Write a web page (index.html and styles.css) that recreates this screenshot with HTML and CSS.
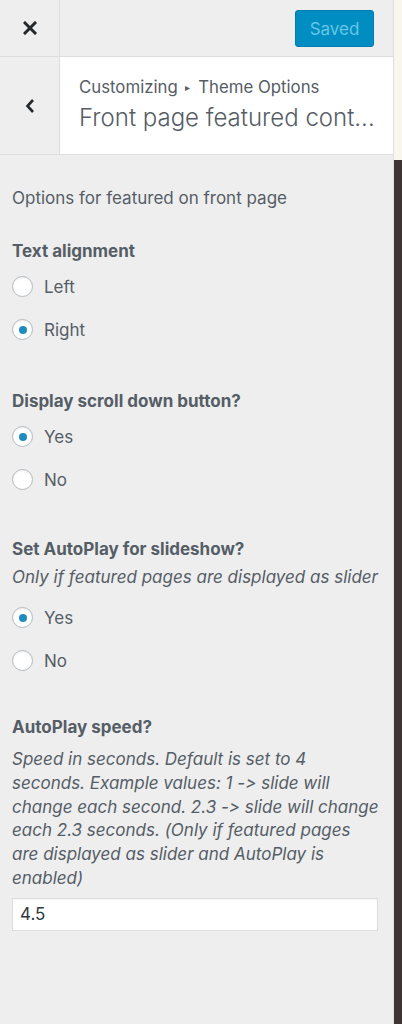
FILE: index.html
```html
<!DOCTYPE html>
<html lang="en">
<head>
  <meta charset="UTF-8" />
  <meta name="viewport" content="width=device-width, initial-scale=1.0"/>
  <title>Customizing: Front page featured content</title>
  <link rel="stylesheet" href="styles.css">
</head>
<body>

  <div class="layout">

    <!-- Customizer sidebar -->
    <div class="sidebar">

      <div class="top-bar">
        <a href="#" class="close-btn" aria-label="Close">
          <svg width="14" height="14" viewBox="0 0 14 14">
            <path d="M2 2 L12 12 M12 2 L2 12" stroke="#23282d" stroke-width="3" stroke-linecap="square" fill="none"/>
          </svg>
        </a>
        <div class="top-actions">
          <button class="btn-saved" disabled>Saved</button>
        </div>
      </div>

      <div class="section-head">
        <a href="#" class="back-btn" aria-label="Back">
          <svg width="10" height="16" viewBox="0 0 10 16">
            <path d="M8 2 L2.5 8 L8 14" stroke="#23282d" stroke-width="2.6" fill="none"/>
          </svg>
        </a>
        <div class="section-title">
          <div class="crumbs">Customizing <span class="crumb-sep">&#9656;</span> Theme Options</div>
          <h3>Front page featured cont...</h3>
        </div>
      </div>

      <div class="controls">
        <p class="section-desc">Options for featured on front page</p>

        <div class="control ctl-align">
          <span class="control-title">Text alignment</span>
          <label class="radio-row"><input type="radio" name="align" /> <span>Left</span></label>
          <label class="radio-row"><input type="radio" name="align" checked /> <span>Right</span></label>
        </div>

        <div class="control ctl-scroll">
          <span class="control-title">Display scroll down button?</span>
          <label class="radio-row"><input type="radio" name="scroll" checked /> <span>Yes</span></label>
          <label class="radio-row"><input type="radio" name="scroll" /> <span>No</span></label>
        </div>

        <div class="control ctl-autoplay">
          <span class="control-title">Set AutoPlay for slideshow?</span>
          <span class="control-desc">Only if featured pages are displayed as slider</span>
          <label class="radio-row"><input type="radio" name="autoplay" checked /> <span>Yes</span></label>
          <label class="radio-row"><input type="radio" name="autoplay" /> <span>No</span></label>
        </div>

        <div class="control ctl-speed">
          <span class="control-title">AutoPlay speed?</span>
          <span class="control-desc speed-desc">Speed in seconds. Default is set to 4 seconds. Example values: 1 -&gt; slide will change each second. 2.3 -&gt; slide will change each 2.3 seconds. (Only if featured pages are displayed as slider and AutoPlay is enabled)</span>
          <input type="text" class="text-input" value="4.5" />
        </div>
      </div>

    </div>

    <!-- Preview frame edge -->
    <div class="preview">
      <div class="preview-top"></div>
      <div class="preview-body"></div>
    </div>

  </div>

</body>
</html>
```

FILE: styles.css
```css
* {
  margin: 0;
  padding: 0;
  box-sizing: border-box;
}

body {
  font-family: Inter, "Noto Sans", sans-serif;
  font-feature-settings: "calt" 0;
  color: #555d66;
  background-color: #eeeeee;
}

.layout {
  display: flex;
  height: 1024px;
  overflow: hidden;
}

.sidebar {
  width: 394px;
  flex-shrink: 0;
  background-color: #eeeeee;
  border-right: 1px solid #dddddd;
}

.preview {
  flex: 1;
  display: flex;
  flex-direction: column;
}

.preview-top {
  height: 160px;
  background-color: #f9f6ee;
}

.preview-body {
  flex: 1;
  background-color: #3e3434;
}

/* top bar */
.top-bar {
  display: flex;
  height: 57px;
  border-bottom: 1px solid #dddddd;
}

.close-btn {
  width: 60px;
  display: flex;
  align-items: center;
  justify-content: center;
  border-right: 1px solid #dddddd;
}

.top-actions {
  flex: 1;
  display: flex;
  align-items: center;
  justify-content: flex-end;
  padding-right: 19px;
}

.btn-saved {
  width: 79px;
  height: 37px;
  background-color: #008ec2;
  border: 1px solid #007cb2;
  border-radius: 3px;
  color: #66c6e4;
  font-family: inherit;
  font-size: 17px;
  margin-top: 1px;
}

/* section header */
.section-head {
  display: flex;
  height: 98px;
  border-bottom: 1px solid #dddddd;
}

.back-btn {
  width: 60px;
  display: flex;
  align-items: center;
  justify-content: center;
  border-right: 1px solid #dddddd;
}

.section-title {
  flex: 1;
  min-width: 0;
  background-color: #ffffff;
  padding: 19px 8px 0 19px;
}

.crumbs {
  font-size: 16.8px;
  line-height: 22px;
  color: #555d66;
  white-space: nowrap;
}

.crumb-sep {
  font-size: 10px;
  vertical-align: 2px;
  margin: 0 3px;
}

.section-title h3 {
  font-size: 24px;
  font-weight: 300;
  line-height: 34px;
  margin-top: 3px;
  color: #555d66;
  white-space: nowrap;
  overflow: hidden;
}

/* controls */
.controls {
  padding: 31px 12px 0 12px;
}

.section-desc {
  font-size: 17px;
  line-height: 24px;
  margin-bottom: 29px;
}

.control {
  display: flex;
  flex-direction: column;
}

.control-title {
  font-size: 17px;
  font-weight: 700;
  line-height: 24px;
  margin-bottom: 2px;
}

.control-desc {
  font-size: 17px;
  font-style: italic;
  line-height: 24px;
  margin-top: 2px;
  margin-bottom: 7px;
}

.ctl-align {
  margin-bottom: 38px;
}

.ctl-scroll {
  margin-bottom: 36px;
}

.ctl-autoplay {
  margin-bottom: 33px;
}

.speed-desc {
  margin-top: 7px;
  line-height: 23.8px;
  margin-bottom: 7px;
}

.radio-row {
  display: flex;
  align-items: center;
  height: 43px;
  font-size: 17px;
}

.radio-row input {
  appearance: none;
  width: 21px;
  height: 21px;
  border: 1px solid #b4b9be;
  border-radius: 50%;
  background-color: #ffffff;
  box-shadow: inset 0 1px 2px rgba(0, 0, 0, 0.07);
  margin-right: 11px;
  display: flex;
  align-items: center;
  justify-content: center;
}

.radio-row input:checked::before {
  content: "";
  width: 8px;
  height: 8px;
  border-radius: 50%;
  background-color: #1e8cbe;
}

.text-input {
  width: 366px;
  height: 33px;
  border: 1px solid #dddddd;
  background-color: #ffffff;
  padding: 0 7px;
  font-family: inherit;
  font-size: 17px;
  color: #32373c;
  box-shadow: inset 0 1px 2px rgba(0, 0, 0, 0.04);
}
```
